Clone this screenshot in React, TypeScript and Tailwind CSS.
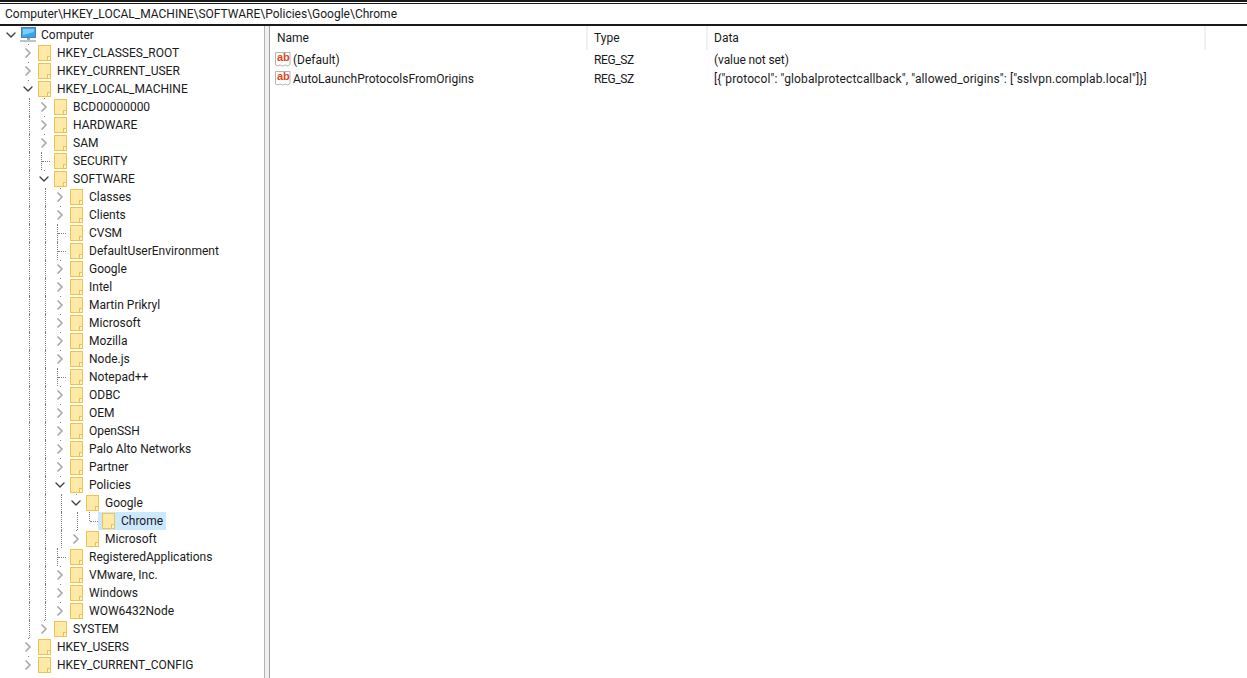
import { ChevronDown, ChevronRight } from 'lucide-react';

type Node = { label: string; depth: number; state: 'open' | 'closed' | 'leaf'; guides: number[]; selected?: boolean };

// guides = depth levels which still have a dotted line running through this row
const rows: Node[] = [
  { label: 'HKEY_CLASSES_ROOT', depth: 1, state: 'closed', guides: [] },
  { label: 'HKEY_CURRENT_USER', depth: 1, state: 'closed', guides: [] },
  { label: 'HKEY_LOCAL_MACHINE', depth: 1, state: 'open', guides: [] },
  { label: 'BCD00000000', depth: 2, state: 'closed', guides: [1] },
  { label: 'HARDWARE', depth: 2, state: 'closed', guides: [1] },
  { label: 'SAM', depth: 2, state: 'closed', guides: [1] },
  { label: 'SECURITY', depth: 2, state: 'leaf', guides: [1] },
  { label: 'SOFTWARE', depth: 2, state: 'open', guides: [1] },
  { label: 'Classes', depth: 3, state: 'closed', guides: [1, 2] },
  { label: 'Clients', depth: 3, state: 'closed', guides: [1, 2] },
  { label: 'CVSM', depth: 3, state: 'leaf', guides: [1, 2] },
  { label: 'DefaultUserEnvironment', depth: 3, state: 'leaf', guides: [1, 2] },
  { label: 'Google', depth: 3, state: 'closed', guides: [1, 2] },
  { label: 'Intel', depth: 3, state: 'closed', guides: [1, 2] },
  { label: 'Martin Prikryl', depth: 3, state: 'closed', guides: [1, 2] },
  { label: 'Microsoft', depth: 3, state: 'closed', guides: [1, 2] },
  { label: 'Mozilla', depth: 3, state: 'closed', guides: [1, 2] },
  { label: 'Node.js', depth: 3, state: 'closed', guides: [1, 2] },
  { label: 'Notepad++', depth: 3, state: 'leaf', guides: [1, 2] },
  { label: 'ODBC', depth: 3, state: 'closed', guides: [1, 2] },
  { label: 'OEM', depth: 3, state: 'closed', guides: [1, 2] },
  { label: 'OpenSSH', depth: 3, state: 'closed', guides: [1, 2] },
  { label: 'Palo Alto Networks', depth: 3, state: 'closed', guides: [1, 2] },
  { label: 'Partner', depth: 3, state: 'closed', guides: [1, 2] },
  { label: 'Policies', depth: 3, state: 'open', guides: [1, 2] },
  { label: 'Google', depth: 4, state: 'open', guides: [1, 2, 3] },
  { label: 'Chrome', depth: 5, state: 'leaf', guides: [1, 2, 3, 4], selected: true },
  { label: 'Microsoft', depth: 4, state: 'closed', guides: [1, 2, 3] },
  { label: 'RegisteredApplications', depth: 3, state: 'leaf', guides: [1, 2] },
  { label: 'VMware, Inc.', depth: 3, state: 'closed', guides: [1, 2] },
  { label: 'Windows', depth: 3, state: 'closed', guides: [1, 2] },
  { label: 'WOW6432Node', depth: 3, state: 'closed', guides: [1, 2] },
  { label: 'SYSTEM', depth: 2, state: 'closed', guides: [1] },
  { label: 'HKEY_USERS', depth: 1, state: 'closed', guides: [] },
  { label: 'HKEY_CURRENT_CONFIG', depth: 1, state: 'closed', guides: [] },
];

function Folder() {
  return (
    <svg width="13" height="16" viewBox="0 0 13 16" className="shrink-0">
      <rect x="0.5" y="0.5" width="12" height="15" fill="#fee9a6" stroke="#efc350" />
      <rect x="9.5" y="11.5" width="3" height="4" fill="#fff3c4" stroke="#efc350" />
    </svg>
  );
}

function Computer() {
  return (
    <svg width="18" height="16" viewBox="0 0 18 16" className="shrink-0">
      <rect x="2.5" y="0.5" width="14" height="10" fill="#35a7ec" stroke="#5b7f9f" />
      <path d="M4 2h11v3L4 8z" fill="#7fcdf6" />
      <rect x="8" y="11" width="3" height="2" fill="#9aa7b2" />
      <rect x="1" y="13" width="16" height="2" fill="#b9c4cc" />
    </svg>
  );
}

function RegString() {
  return (
    <svg width="16" height="15" viewBox="0 0 16 15" className="shrink-0">
      <path d="M0.5 0.5h14.5v12l-2.5 1.5-2.5-1-2.5 1-2.5-1-2 1-2.5-1z" fill="#fff" stroke="#b5b5b5" />
      <text x="2" y="9" fontSize="11" fontWeight="700" fill="#d9481f" fontFamily="'Liberation Sans', sans-serif">ab</text>
    </svg>
  );
}

function TreeRow({ node }: { node: Node }) {
  const cells = [];
  for (let i = 1; i < node.depth; i++) {
    cells.push(
      <div key={i} className="w-4 h-full shrink-0 flex justify-center">
        {node.guides.includes(i) && <div className="h-full border-l border-dotted border-[#808080]" />}
      </div>
    );
  }
  return (
    <div className="flex h-[18px] items-center">
      {cells}
      {node.state === 'leaf' ? (
        <div className="w-4 h-full shrink-0 flex justify-center">
          <div className={`${node.selected ? 'h-1/2' : 'h-full'} border-l border-dotted border-[#808080]`} />
          <div className="mt-[9px] w-2 h-0 -mr-[1px] border-t border-dotted border-[#808080]" />
        </div>
      ) : (
        <div className="w-4 h-full shrink-0 flex flex-col items-center pr-[2px]">
          <div className="w-px h-px bg-[#808080]" />
          {node.state === 'open' ? (
            <ChevronDown size={16} strokeWidth={2} className="text-[#404040]" />
          ) : (
            <ChevronRight size={16} strokeWidth={2.5} className="text-[#a6a6a6]" />
          )}
        </div>
      )}
      <div className={`flex h-full items-center ${node.selected ? 'bg-[#cce8ff] -ml-[3px] pl-[4px] pr-[3px]' : 'pl-[1px]'}`}>
        <Folder />
        <span className="ml-[6px] whitespace-nowrap">{node.label}</span>
      </div>
    </div>
  );
}

export default function App() {
  return (
    <div className="h-[678px] w-[1247px] overflow-hidden bg-white text-[12px] leading-[18px] text-[#1a1a1a] flex flex-col font-['Roboto',sans-serif]">
      <div className="h-[2px] bg-[#1a1a1a]" />
      <div className="h-[23px] mt-[1px] border-t border-[#1a1a1a] border-b-2 flex items-center pl-[5px] shrink-0">
        Computer\HKEY_LOCAL_MACHINE\SOFTWARE\Policies\Google\Chrome
      </div>
      <div className="flex flex-1 min-h-0">
        <div className="w-[264px] shrink-0 overflow-hidden pl-[3px]">
          <div className="flex h-[18px] items-center">
            <div className="w-4 shrink-0 flex justify-center">
              <ChevronDown size={16} strokeWidth={2} className="text-[#404040]" />
            </div>
            <Computer />
            <span className="ml-1">Computer</span>
          </div>
          <div className="pl-[18px]">
            {rows.map((r, i) => (
              <TreeRow key={i} node={r} />
            ))}
          </div>
        </div>
        <div className="w-[6px] shrink-0 bg-[#f0f0f0] border-l border-r border-l-[#b4b4b4] border-r-[#a0a0a0]" />
        <div className="flex-1 min-w-0">
          <div className="flex h-[24px] items-center">
            <div className="w-[318px] pl-[7px] h-full flex items-center border-r-2 border-[#f0f0f0]">Name</div>
            <div className="w-[120px] pl-[6px] h-full flex items-center border-r-2 border-[#f0f0f0]">Type</div>
            <div className="w-[498px] pl-[6px] h-full flex items-center border-r-2 border-[#f0f0f0]">Data</div>
          </div>
          {[
            { name: '(Default)', data: '(value not set)', spacing: 'tracking-[-0.1px]' },
            {
              name: 'AutoLaunchProtocolsFromOrigins',
              data: '[{"protocol": "globalprotectcallback", "allowed_origins": ["sslvpn.complab.local"]}]',
              spacing: 'tracking-[0.12px]',
            },
          ].map(({ name, data, spacing }) => (
            <div key={name} className="flex h-[19px] items-center">
              <div className="w-[318px] pl-[5px] flex items-center shrink-0">
                <RegString />
                <span className="ml-[2px]">{name}</span>
              </div>
              <div className="w-[120px] pl-[6px] shrink-0 tracking-[-0.4px]">REG_SZ</div>
              <div className={`pl-[6px] whitespace-nowrap ${spacing}`}>{data}</div>
            </div>
          ))}
        </div>
      </div>
    </div>
  );
}
